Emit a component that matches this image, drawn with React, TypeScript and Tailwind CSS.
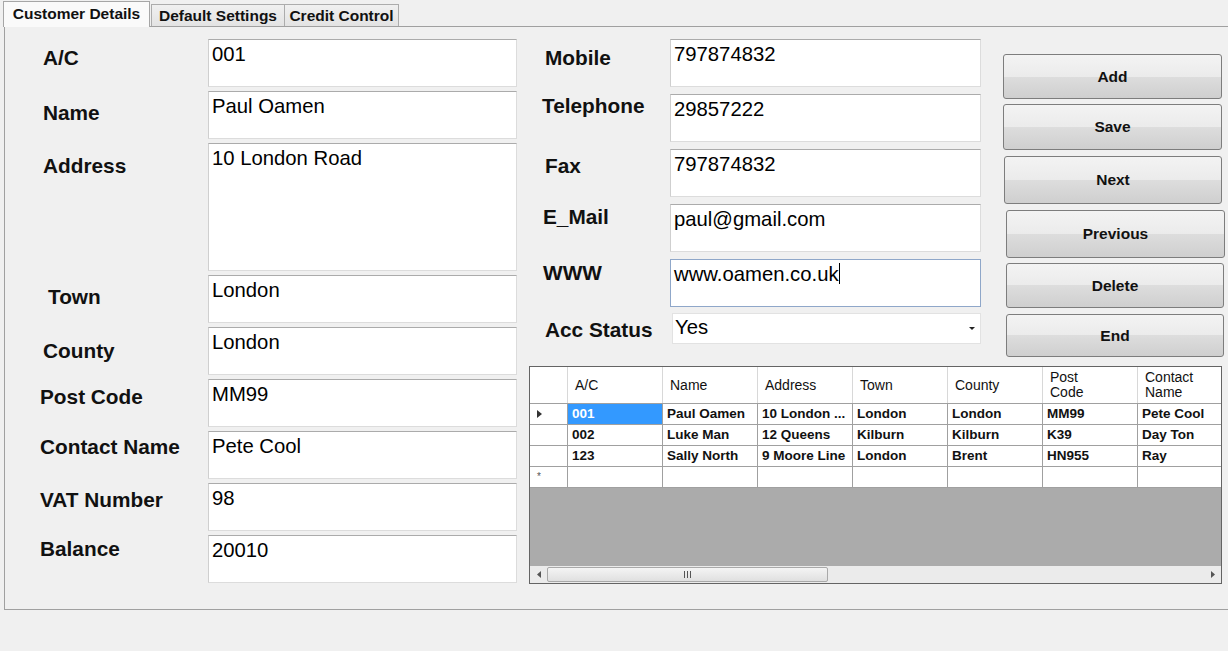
import React from 'react';

const leftFields = [
  { label: 'A/C', value: '001', lc: 'pt-[7px] pl-[38px]', h: 'h-[48px]' },
  { label: 'Name', value: 'Paul Oamen', lc: 'pt-[10px] pl-[38px]', h: 'h-[48px]' },
  { label: 'Address', value: '10 London Road', lc: 'pt-[11px] pl-[38px]', h: 'h-[128px]' },
  { label: 'Town', value: 'London', lc: 'pt-[10px] pl-[43px]', h: 'h-[48px]' },
  { label: 'County', value: 'London', lc: 'pt-[12px] pl-[38px]', h: 'h-[48px]' },
  { label: 'Post Code', value: 'MM99', lc: 'pt-[6px] pl-[35px]', h: 'h-[48px]' },
  { label: 'Contact Name', value: 'Pete Cool', lc: 'pt-[4px] pl-[35px]', h: 'h-[48px]' },
  { label: 'VAT Number', value: '98', lc: 'pt-[5px] pl-[35px]', h: 'h-[48px]' },
  { label: 'Balance', value: '20010', lc: 'pt-[2px] pl-[35px]', h: 'h-[48px]' },
];

const midFields = [
  { label: 'Mobile', value: '797874832', lc: 'pt-[7px] pl-[16px]' },
  { label: 'Telephone', value: '29857222', lc: 'pt-[0px] pl-[13px]' },
  { label: 'Fax', value: '797874832', lc: 'pt-[5px] pl-[16px]' },
  { label: 'E_Mail', value: 'paul@gmail.com', lc: 'pt-[1px] pl-[14px]' },
];

const buttons = [
  { text: 'Add', c: 'h-[45px] w-[219px]' },
  { text: 'Save', c: 'mt-[5px] h-[46px] w-[219px]' },
  { text: 'Next', c: 'mt-[6px] ml-[1px] h-[48px] w-[218px]' },
  { text: 'Previous', c: 'mt-[6px] ml-[3px] h-[48px] w-[219px]' },
  { text: 'Delete', c: 'mt-[5px] ml-[3px] h-[45px] w-[218px]' },
  { text: 'End', c: 'mt-[6px] ml-[3px] h-[43px] w-[218px]' },
];

const columns = ['A/C', 'Name', 'Address', 'Town', 'County', 'Post\nCode', 'Contact\nName'];

const rows = [
  ['001', 'Paul Oamen', '10 London ...', 'London', 'London', 'MM99', 'Pete Cool'],
  ['002', 'Luke Man', '12 Queens', 'Kilburn', 'Kilburn', 'K39', 'Day Ton'],
  ['123', 'Sally North', '9 Moore Line', 'London', 'Brent', 'HN955', 'Ray'],
];

const boxBorder = 'border border-[#dcdcdc] border-t-[#ababab] border-l-[#cfcfcf]';

function TextBox({ value, h, focused }: { value: string; h: string; focused?: boolean }) {
  return (
    <div
      className={`${h} bg-white pl-[3px] pt-[3px] text-[20.3px] leading-[22px] text-black ${
        focused ? 'border border-[#8fa7c9]' : boxBorder
      }`}
    >
      {value}
      {focused && <span className="inline-block w-px h-[21px] bg-black align-top" />}
    </div>
  );
}

function Button({ text, c }: { text: string; c: string }) {
  return (
    <div
      className={`${c} flex items-center justify-center rounded-[3px] border border-[#7d7d7d] bg-[linear-gradient(#f3f3f3_0%,#ebebeb_50%,#dddddd_50%,#cfcfcf_100%)] text-[15.5px] font-bold text-[#111]`}
    >
      {text}
    </div>
  );
}

function DataGrid() {
  return (
    <div className="ml-0 mt-[9px] flex h-[218px] w-[693px] flex-col overflow-hidden border border-[#646464] bg-[#ababab]">
      {/* header */}
      <div className="flex h-[37px] shrink-0 border-b border-[#a0a0a0] bg-white text-[14px] text-[#111]">
        <div className="w-[38px] shrink-0 border-r border-[#d8d8d8]" />
        {columns.map((c) => (
          <div
            key={c}
            className="flex w-[95px] shrink-0 items-center whitespace-pre border-r border-[#d8d8d8] pl-[7px] leading-[15px]"
          >
            {c}
          </div>
        ))}
      </div>
      {rows.map((r, i) => (
        <div key={i} className="flex h-[21px] shrink-0 border-b border-[#a0a0a0] bg-white text-[13.5px] font-bold text-[#111]">
          <div className="flex w-[38px] shrink-0 items-center border-r border-[#a0a0a0] pl-[7px]">
            {i === 0 && (
              <svg width="5" height="8" viewBox="0 0 5 8">
                <path d="M0 0 L5 4 L0 8 Z" fill="#333" />
              </svg>
            )}
          </div>
          {r.map((v, j) => (
            <div
              key={j}
              className={`flex w-[95px] shrink-0 items-center whitespace-nowrap border-r border-[#a0a0a0] pl-[4px] ${
                i === 0 && j === 0 ? 'bg-[#3399ff] text-white' : ''
              }`}
            >
              {v}
            </div>
          ))}
        </div>
      ))}
      <div className="flex h-[21px] shrink-0 border-b border-[#a0a0a0] bg-white">
        <div className="flex w-[38px] shrink-0 items-center border-r border-[#a0a0a0] pl-[7px] text-[10px] leading-none text-[#555]">
          *
        </div>
        {columns.map((c) => (
          <div key={c} className="w-[95px] shrink-0 border-r border-[#a0a0a0]" />
        ))}
      </div>
      <div className="flex-1" />
      {/* horizontal scroll bar */}
      <div className="flex h-[17px] shrink-0 items-center bg-[#ebebeb]">
        <div className="flex w-[17px] shrink-0 items-center justify-center">
          <svg width="4" height="7" viewBox="0 0 4 7">
            <path d="M4 0 L0 3.5 L4 7 Z" fill="#555" />
          </svg>
        </div>
        <div className="flex h-[15px] w-[281px] shrink-0 items-center justify-center rounded-[2px] border border-[#a9a9a9] bg-[linear-gradient(#f4f4f4,#e0e0e0)]">
          <div className="flex gap-[2px]">
            <span className="h-[7px] w-px bg-[#555]" />
            <span className="h-[7px] w-px bg-[#555]" />
            <span className="h-[7px] w-px bg-[#555]" />
          </div>
        </div>
        <div className="flex-1" />
        <div className="flex w-[17px] shrink-0 items-center justify-center">
          <svg width="4" height="7" viewBox="0 0 4 7">
            <path d="M0 0 L4 3.5 L0 7 Z" fill="#555" />
          </svg>
        </div>
      </div>
    </div>
  );
}

export default function App() {
  return (
    <div className="h-[651px] w-[1228px] overflow-hidden bg-[#f0f0f0] font-['Liberation_Sans',Arial,sans-serif] text-black">
      {/* tab strip */}
      <div className="flex h-[26px] items-end pl-[3px] text-[15.5px] font-bold text-[#111]">
        <div className="relative z-10 -mb-px flex h-[26px] w-[147px] items-center justify-center border border-b-0 border-[#a6a6a6] bg-[#fafafa] pb-[1px]">
          Customer Details
        </div>
        <div className="ml-px flex h-[22px] w-[134px] items-center justify-center border border-b-0 border-[#acacac] bg-[linear-gradient(#f0f0f0,#e3e3e3)]">
          Default Settings
        </div>
        <div className="-ml-px flex h-[22px] w-[115px] items-center justify-center border border-b-0 border-[#acacac] bg-[linear-gradient(#f0f0f0,#e3e3e3)]">
          Credit Control
        </div>
      </div>

      {/* tab page */}
      <div className="ml-[4px] flex h-[584px] w-[1240px] border-b border-l border-t border-[#a0a0a0] bg-[#f0f0f0]">
        {/* left column */}
        <div className="flex w-[512px] shrink-0 flex-col gap-[4px] pt-[12px]">
          {leftFields.map((f) => (
            <div key={f.label} className="flex">
              <div className={`w-[203px] shrink-0 text-[20.8px] font-bold leading-[23px] text-[#111] ${f.lc}`}>
                {f.label}
              </div>
              <div className="w-[309px] shrink-0">
                <TextBox value={f.value} h={f.h} />
              </div>
            </div>
          ))}
        </div>

        {/* right section */}
        <div className="ml-[12px] flex flex-col">
          <div className="flex h-[330px] pt-[12px]">
            <div className="flex w-[452px] flex-col gap-[7px]">
              {midFields.map((f) => (
                <div key={f.label} className="flex">
                  <div className={`w-[141px] shrink-0 text-[20.8px] font-bold leading-[23px] text-[#111] ${f.lc}`}>
                    {f.label}
                  </div>
                  <div className="w-[311px] shrink-0">
                    <TextBox value={f.value} h="h-[48px]" />
                  </div>
                </div>
              ))}
              <div className="flex">
                <div className="w-[141px] shrink-0 pl-[14px] pt-[2px] text-[20.8px] font-bold leading-[23px] text-[#111]">
                  WWW
                </div>
                <div className="w-[311px] shrink-0">
                  <TextBox value="www.oamen.co.uk" h="h-[48px]" focused />
                </div>
              </div>
              <div className="-mt-px flex">
                <div className="w-[143px] shrink-0 pl-[16px] pt-[5px] text-[20.8px] font-bold leading-[23px] text-[#111]">
                  Acc Status
                </div>
                <div className="flex h-[31px] w-[309px] shrink-0 items-center justify-between border border-[#e2e2e2] bg-white pl-[2px] pr-[5px] text-[20.3px]">
                  <span className="-mt-[2px]">Yes</span>
                  <svg width="6" height="3" viewBox="0 0 6 3">
                    <path d="M0 0 L6 0 L3 3 Z" fill="#222" />
                  </svg>
                </div>
              </div>
            </div>

            <div className="ml-[22px] mt-[15px] flex flex-col">
              {buttons.map((b) => (
                <Button key={b.text} text={b.text} c={b.c} />
              ))}
            </div>
          </div>

          <DataGrid />
        </div>
      </div>
    </div>
  );
}
